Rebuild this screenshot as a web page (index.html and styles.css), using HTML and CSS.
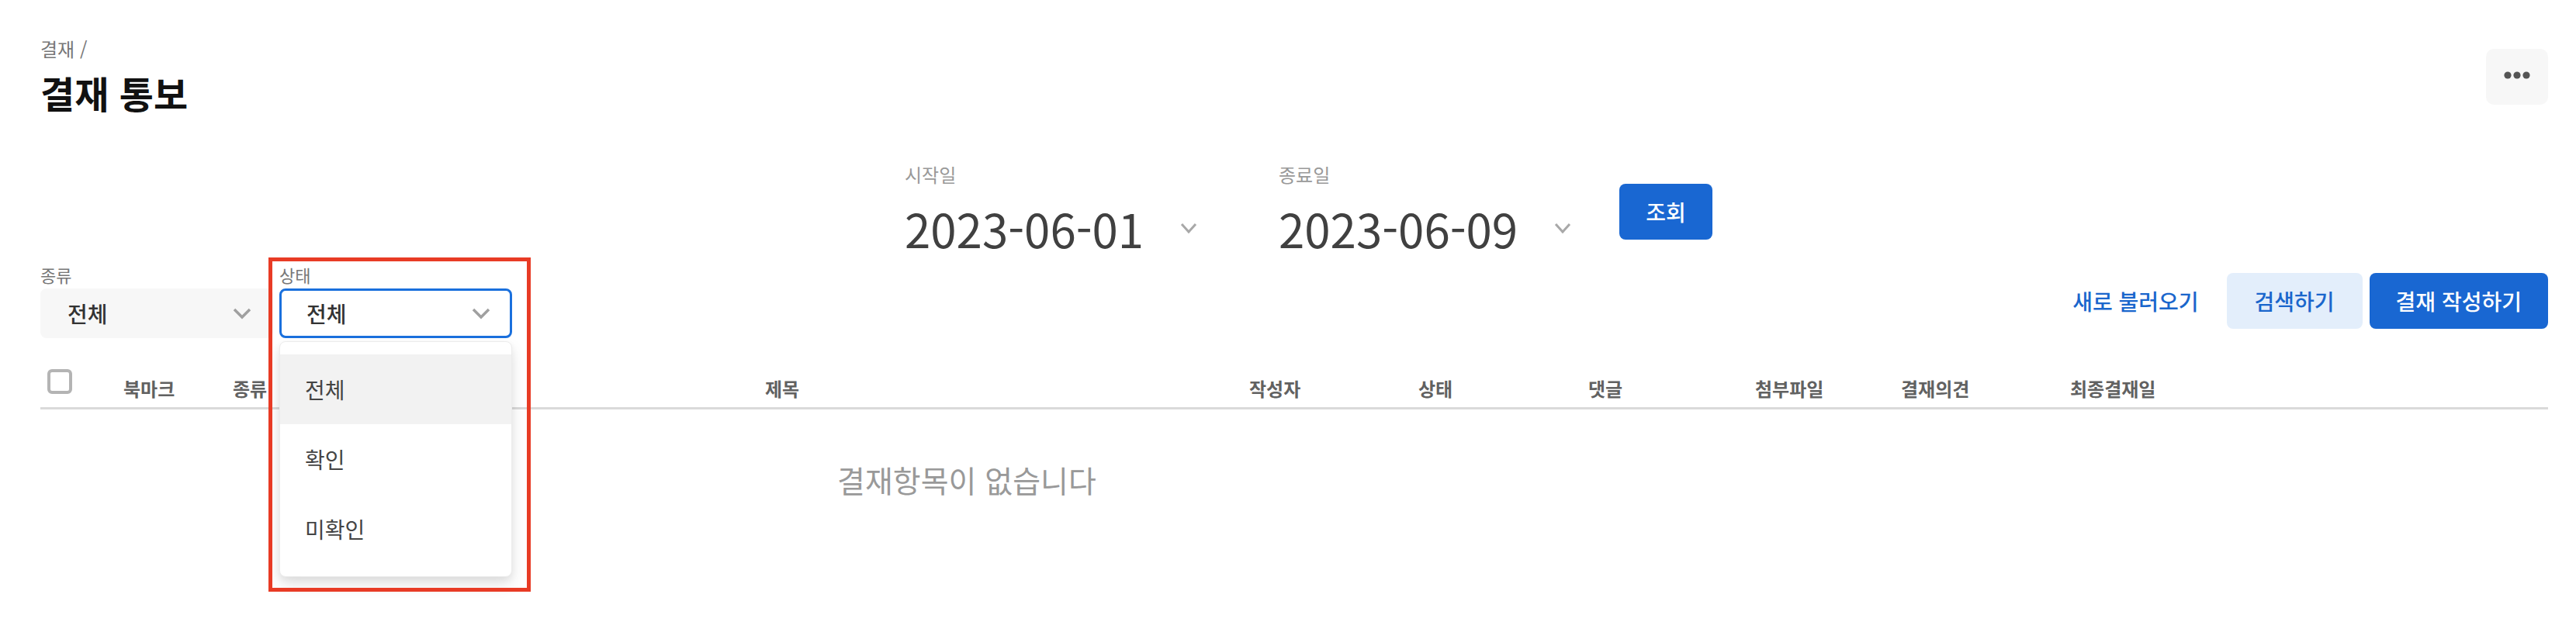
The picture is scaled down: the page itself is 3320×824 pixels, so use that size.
FILE: index.html
```html
<!DOCTYPE html>
<html lang="ko">
<head>
<meta charset="utf-8">
<title>결재 통보</title>
<link rel="stylesheet" href="styles.css">
</head>
<body>
<div class="page">
  <header class="top">
    <div class="heading">
      <div class="crumb">결재 /</div>
      <h1 class="title">결재 통보</h1>
    </div>
    <button class="more" aria-label="더보기">
      <svg width="80" height="72" viewBox="0 0 80 72"><circle cx="28" cy="34" r="4.6" fill="#555"/><circle cx="40" cy="34" r="4.6" fill="#555"/><circle cx="52" cy="34" r="4.6" fill="#555"/></svg>
    </button>
  </header>

  <section class="period">
    <div class="date-field">
      <div class="date-label">시작일</div>
      <div class="date-input"><span class="date-value">2023-06-01</span>
        <svg class="date-chev" width="22" height="14" viewBox="0 0 22 14"><path d="M2 2 L11 12 L20 2" fill="none" stroke="#a8a8a8" stroke-width="3"/></svg>
      </div>
    </div>
    <div class="date-field second">
      <div class="date-label">종료일</div>
      <div class="date-input"><span class="date-value">2023-06-09</span>
        <svg class="date-chev" width="22" height="14" viewBox="0 0 22 14"><path d="M2 2 L11 12 L20 2" fill="none" stroke="#a8a8a8" stroke-width="3"/></svg>
      </div>
    </div>
    <button class="btn primary lookup">조회</button>
  </section>

  <section class="filters">
    <div class="filter-group">
      <div class="field">
        <div class="field-label">종류</div>
        <div class="select filled"><span class="select-value">전체</span>
          <svg class="chev" width="24" height="15" viewBox="0 0 24 15"><path d="M2 2 L12 12 L22 2" fill="none" stroke="#a0a0a0" stroke-width="3.5"/></svg>
        </div>
      </div>
      <div class="field status">
        <div class="field-label">상태</div>
        <div class="select focused"><span class="select-value">전체</span>
          <svg class="chev" width="24" height="15" viewBox="0 0 24 15"><path d="M2 2 L12 12 L22 2" fill="none" stroke="#a0a0a0" stroke-width="3.5"/></svg>
        </div>
        <ul class="menu">
          <li class="menu-item selected">전체</li>
          <li class="menu-item">확인</li>
          <li class="menu-item">미확인</li>
        </ul>
        <div class="annotation"></div>
      </div>
    </div>
    <div class="actions">
      <button class="btn text">새로 불러오기</button>
      <button class="btn soft">검색하기</button>
      <button class="btn primary write">결재 작성하기</button>
    </div>
  </section>

  <div class="table">
    <div class="thead">
      <div class="th check"><span class="checkbox"></span></div>
      <div class="th">북마크</div>
      <div class="th">종류</div>
      <div class="th">제목</div>
      <div class="th">작성자</div>
      <div class="th">상태</div>
      <div class="th">댓글</div>
      <div class="th">첨부파일</div>
      <div class="th">결재의견</div>
      <div class="th">최종결재일</div>
    </div>
    <div class="empty">결재항목이 없습니다</div>
  </div>
</div>
</body>
</html>
```

FILE: styles.css
```css
* { box-sizing: border-box; }
html, body { margin: 0; padding: 0; background: #fff; }
body {
  font-family: "Noto Sans CJK KR", "Noto Sans", sans-serif;
  color: #222;
  width: 3320px;
  height: 824px;
  overflow: hidden;
}
button { font-family: inherit; border: 0; margin: 0; cursor: pointer; }
ul { margin: 0; padding: 0; list-style: none; }

.page {
  padding: 47px 36px 0 52px;
}

/* top */
.top {
  display: flex;
  align-items: center;
  justify-content: space-between;
}
.heading { display: flex; flex-direction: column; gap: 8px; }
.crumb {
  font-size: 24px;
  line-height: 32px;
  color: #777;
}
.title {
  margin: 0;
  font-size: 48px;
  line-height: 64px;
  font-weight: 700;
  color: #111;
}
.more {
  width: 80px;
  height: 72px;
  border-radius: 10px;
  background: #f7f7f7;
  padding: 0;
  display: flex;
}

/* period */
.period {
  margin-top: 58px;
  display: flex;
  justify-content: center;
  align-items: flex-start;
  padding-left: 37px;
}
.date-field { width: 400px; display: flex; flex-direction: column; gap: 17px; }
.date-field.second { margin-left: 82px; }
.date-label {
  font-size: 24px;
  line-height: 32px;
  color: #999;
}
.date-input {
  display: flex;
  align-items: center;
  justify-content: space-between;
  padding-right: 23px;
  height: 72px;
}
.date-value {
  font-size: 60px;
  line-height: 72px;
  color: #404040;
}
.date-chev { display: block; }

.btn {
  height: 72px;
  padding: 0 36px;
  border-radius: 8px;
  font-size: 28px;
  font-weight: 500;
  white-space: nowrap;
}
.btn.primary { background: #1967d2; color: #fff; }
.btn.soft { background: #e3eefb; color: #1a66cc; }
.btn.text { background: transparent; color: #1a66cc; }
.btn.write { padding: 0 34px; }
.lookup { width: 120px; padding: 0; margin-left: 39px; margin-top: 28px; }

/* filters */
.filters {
  margin-top: 9px;
  display: flex;
  align-items: center;
  justify-content: space-between;
}
.filter-group { display: flex; gap: 8px; }
.field { width: 300px; display: flex; flex-direction: column; gap: 3px; }
.field.status { position: relative; }
.field-label {
  font-size: 22px;
  line-height: 30px;
  color: #777;
}
.select {
  height: 64px;
  border-radius: 8px;
  display: flex;
  align-items: center;
  justify-content: space-between;
  padding: 0 28px 0 35px;
}
.select.filled { background: #f7f7f7; }
.select.focused { border: 3px solid #1a70dd; padding: 0 25px 0 32px; background: #fff; }
.select-value {
  font-size: 28px;
  line-height: 36px;
  font-weight: 500;
  color: #333;
}
.chev { display: block; }

.menu {
  position: absolute;
  left: 0;
  top: 101px;
  width: 300px;
  padding: 16px 0;
  background: #fff;
  border-radius: 8px;
  border: 1px solid #ececec;
  box-shadow: 0 10px 20px rgba(0,0,0,0.10), 0 4px 10px rgba(0,0,0,0.06);
  z-index: 5;
}
.menu-item {
  height: 90px;
  display: flex;
  align-items: center;
  padding-left: 32px;
  font-size: 28px;
  color: #444;
}
.menu-item.selected { background: #f2f2f2; }

.annotation {
  position: absolute;
  left: -14px;
  top: -7px;
  width: 338px;
  height: 431px;
  border: 5px solid #e83b25;
  z-index: 6;
  pointer-events: none;
}

.actions { display: flex; align-items: center; }
.actions .btn.soft { margin-right: 9px; }

/* table */
.table { margin-top: 34px; }
.thead {
  display: grid;
  grid-template-columns: 107px 141px 686px 624px 218px 219px 215px 188px 218px 1fr;
  align-items: start;
  padding: 6px 0 8px;
  border-bottom: 3px solid #dadada;
}
.th {
  margin-top: 9px;
  font-size: 24px;
  line-height: 32px;
  font-weight: 700;
  color: #616161;
}
.th.check { margin-top: 0; padding-left: 9px; }
.checkbox {
  display: block;
  width: 32px;
  height: 32px;
  border: 4px solid #b4b4b4;
  border-radius: 6px;
}
.empty {
  margin-top: 64px;
  padding-left: 1027px;
  font-size: 39px;
  line-height: 52px;
  color: #999;
}
```
